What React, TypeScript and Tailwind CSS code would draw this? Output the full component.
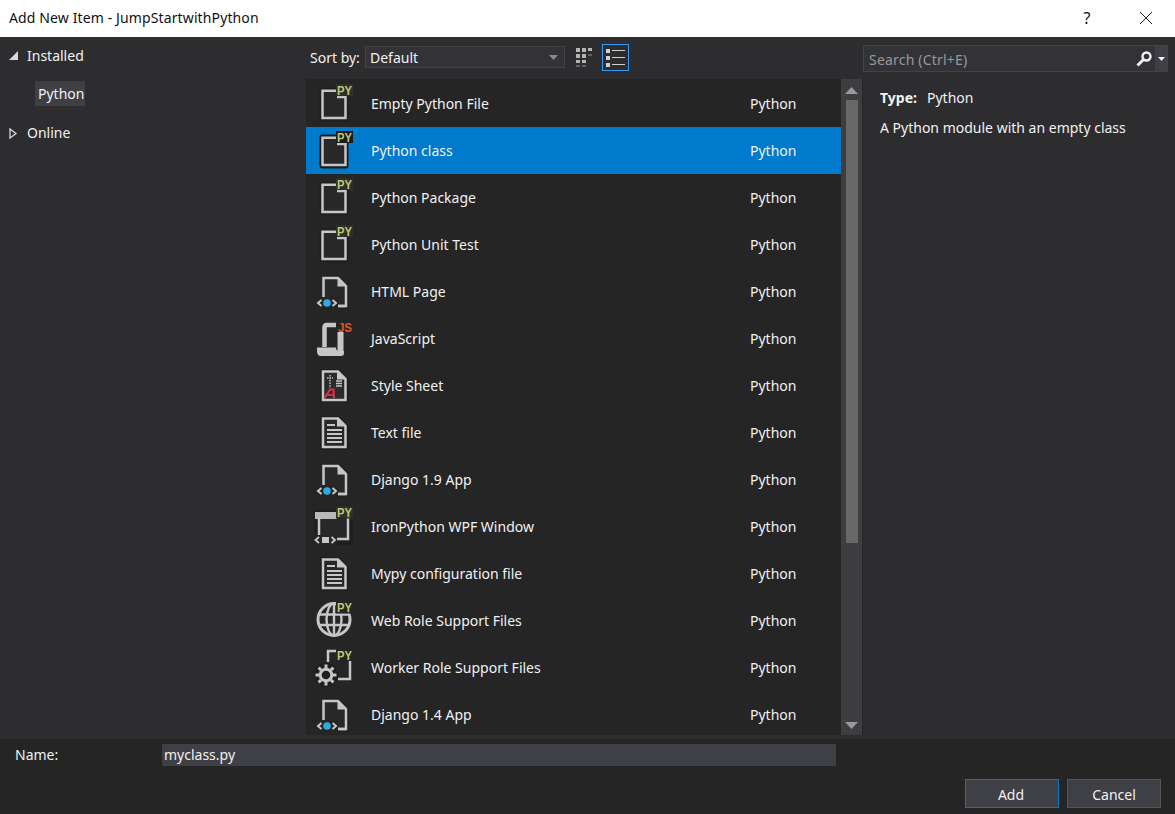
import React from 'react';

const GRAY = '#c6c6c6';

const PY = ({ x = 25, y = 14.5, dark = '#2f2f2c' }: { x?: number; y?: number; dark?: string }) => (
  <>
    <rect x={x - 1} y={y - 10.5} width={17} height={12} fill={dark} />
    <text x={x} y={y} fontFamily="'Liberation Sans', sans-serif" fontWeight="700" fontSize="12.5" textLength="15" lengthAdjust="spacingAndGlyphs" fill="#bcc873">PY</text>
  </>
);

// plain page with a notch, PY badge in the corner
const PyFile = ({ selected }: { selected?: boolean }) => (
  <svg width="48" height="47" viewBox="0 0 48 47">
    <rect x="7.5" y="7.5" width="29" height="34" rx="3" fill={selected ? '#1b1b1c' : '#1f1f20'} />
    <rect x="10.5" y="11" width="23" height="27" fill="#28282a" />
    <path d="M24 10.75H10.5V38H33.5V17H25" fill="none" stroke={GRAY} strokeWidth="2.5" />
    <PY dark={selected ? '#1b1b1c' : '#2f2f2c'} />
  </svg>
);

const HtmlFile = () => (
  <svg width="48" height="47" viewBox="0 0 48 47">
    <path d="M10 29V7.5H27L36.5 17V41H24V30H10Z" fill="#1f1f20" />
    <path d="M11.5 30V10H26L34 18V38H26" fill="#28282a" stroke={GRAY} strokeWidth="2.5" />
    <path d="M25.5 9.5L34.5 18.5H25.5Z" fill={GRAY} />
    <rect x="4" y="29" width="22" height="12" fill="#252526" />
    <path d="M9.5 32L6 35L9.5 38M20.5 32L24 35L20.5 38" fill="none" stroke={GRAY} strokeWidth="2" />
    <path d="M26 38H34" stroke={GRAY} strokeWidth="2.5" />
    <circle cx="15" cy="35" r="3.8" fill="#2fa9e8" />
  </svg>
);

const JsFile = () => (
  <svg width="48" height="47" viewBox="0 0 48 47">
    <path d="M12.5 32V12.5Q12.5 10 15 10H24" fill="none" stroke={GRAY} strokeWidth="4.5" />
    <path d="M28.5 17V36" fill="none" stroke={GRAY} strokeWidth="6" />
    <path d="M5 32.5H24Q24 36 27 36H32V38Q32 41 29 41H9Q5 41 5 36Z" fill={GRAY} />
    <text x="26" y="17" fontFamily="'Liberation Sans', sans-serif" fontWeight="700" fontSize="12" textLength="14" lengthAdjust="spacingAndGlyphs" fill="#e8541e">JS</text>
  </svg>
);

const StyleFile = () => (
  <svg width="48" height="47" viewBox="0 0 48 47">
    <path d="M8 7H27L37 17V41H8Z" fill="#1f1f20" />
    <path d="M11 9.5H26L33.5 17V38H11Z" fill="#2a2a2b" stroke={GRAY} strokeWidth="2.5" />
    <path d="M25 9.5V17.5H33.5Z" fill={GRAY} />
    <path d="M15 16H21M18 13V26" stroke={GRAY} strokeWidth="1.4" strokeDasharray="1.5 1" fill="none" />
    <path d="M24 19H30M24 21.5H30M24 24H30" stroke={GRAY} strokeWidth="1.3" />
    <path d="M12.5 36L18 27.5H21.5L22 36" fill="none" stroke="#d9304f" strokeWidth="2.2" />
    <path d="M15 33H21" stroke="#d9304f" strokeWidth="1.8" />
  </svg>
);

const TextFile = () => (
  <svg width="48" height="47" viewBox="0 0 48 47">
    <path d="M8 7H27L37 17V41H8Z" fill="#1f1f20" />
    <path d="M11 9.5H26L33.5 17V38H11Z" fill="#28282a" stroke={GRAY} strokeWidth="2.5" />
    <path d="M25 9.5V17.5H33.5Z" fill={GRAY} />
    <path d="M15 16H23M15 21H30M15 25H30M15 29H30M15 33H30" stroke={GRAY} strokeWidth="2" />
  </svg>
);

const WpfWindow = () => (
  <svg width="48" height="47" viewBox="0 0 48 47">
    <rect x="2" y="7" width="39" height="35" fill="#1f1f20" />
    <rect x="6" y="16" width="30" height="20" fill="#28282a" />
    <rect x="3" y="9" width="22" height="7" fill="#b8b8b8" />
    <path d="M7 15V32" fill="none" stroke={GRAY} strokeWidth="2.5" />
    <path d="M36 15V36H25" fill="none" stroke={GRAY} strokeWidth="2.5" />
    <rect x="2" y="32" width="23" height="10" fill="#252526" />
    <path d="M7 34L3.5 37L7 40M19.5 34L23 37L19.5 40" fill="none" stroke={GRAY} strokeWidth="1.8" />
    <rect x="10" y="34" width="7" height="6" fill={GRAY} />
    <PY x={25} y={14} />
  </svg>
);

const Globe = () => (
  <svg width="48" height="47" viewBox="0 0 48 47">
    <circle cx="22" cy="22.5" r="16" fill="none" stroke={GRAY} strokeWidth="3" />
    <ellipse cx="22" cy="22.5" rx="7.5" ry="16" fill="none" stroke={GRAY} strokeWidth="2.4" />
    <path d="M22 6V39M6 17.5H38M6 28H38" stroke={GRAY} strokeWidth="2.4" />
    <PY x={25} y={15} dark="#252526" />
  </svg>
);

const Worker = () => (
  <svg width="48" height="47" viewBox="0 0 48 47">
    <path d="M16 18V7H24M38 17V35H26" fill="none" stroke={GRAY} strokeWidth="2.5" />
    <rect x="2" y="19" width="24" height="24" rx="12" fill="#1f1f20" />
    <circle cx="14" cy="31" r="5.8" fill="none" stroke={GRAY} strokeWidth="3" />
    {[0, 45, 90, 135].map((deg) => (
      <path key={deg} d="M14 20.5V24M14 38V41.5" stroke={GRAY} strokeWidth="3" transform={`rotate(${deg} 14 31)`} />
    ))}
    <text x="25" y="15.5" fontFamily="'Liberation Sans', sans-serif" fontWeight="700" fontSize="12.5" textLength="15" lengthAdjust="spacingAndGlyphs" fill="#bcc873">PY</text>
  </svg>
);

const icons: Record<string, React.ReactNode> = {
  py: <PyFile />,
  pysel: <PyFile selected />,
  html: <HtmlFile />,
  js: <JsFile />,
  css: <StyleFile />,
  txt: <TextFile />,
  wpf: <WpfWindow />,
  web: <Globe />,
  worker: <Worker />,
};

const items = [
  { name: 'Empty Python File', icon: 'py' },
  { name: 'Python class', icon: 'pysel', selected: true },
  { name: 'Python Package', icon: 'py' },
  { name: 'Python Unit Test', icon: 'py' },
  { name: 'HTML Page', icon: 'html' },
  { name: 'JavaScript', icon: 'js' },
  { name: 'Style Sheet', icon: 'css' },
  { name: 'Text file', icon: 'txt' },
  { name: 'Django 1.9 App', icon: 'html' },
  { name: 'IronPython WPF Window', icon: 'wpf' },
  { name: 'Mypy configuration file', icon: 'txt' },
  { name: 'Web Role Support Files', icon: 'web' },
  { name: 'Worker Role Support Files', icon: 'worker' },
  { name: 'Django 1.4 App', icon: 'html' },
];

const App = () => {
  return (
    <div className="w-[1175px] h-[814px] flex flex-col overflow-hidden bg-[#2d2d30] text-[#f1f1f1] font-['Noto_Sans',sans-serif] text-[14px] leading-[20px]">
      {/* Title bar */}
      <div className="h-[37px] shrink-0 bg-white text-[#111111] flex items-center pl-[9px] pb-[1px]">
        <span className="tracking-[0.12px]">Add New Item - JumpStartwithPython</span>
        <span className="ml-auto w-[10px] text-center text-[16px]">?</span>
        <svg className="ml-[47px] mr-[22px]" width="14" height="14" viewBox="0 0 14 14">
          <path d="M1 1L13 13M13 1L1 13" stroke="#1a1a1a" strokeWidth="1" fill="none" />
        </svg>
      </div>

      {/* Body */}
      <div className="h-[702px] shrink-0 flex">
        {/* Left tree */}
        <div className="w-[306px] shrink-0">
          <div className="h-[38px] flex items-center pb-[1px]">
            <svg className="ml-[9px] mr-[9px]" width="9" height="9" viewBox="0 0 9 9">
              <path d="M9 0V9H0Z" fill="#d8d8d8" />
            </svg>
            <span>Installed</span>
          </div>
          <div className="h-[25px] w-[50px] ml-[35px] mt-[6px] pl-[3px] bg-[#3f3f46] flex items-center">Python</div>
          <div className="h-[38px] flex items-center mt-[8px]">
            <svg className="ml-[9px] mr-[9px]" width="9" height="11" viewBox="0 0 9 11">
              <path d="M1 1L7 5.5L1 10Z" fill="none" stroke="#d8d8d8" strokeWidth="1.3" />
            </svg>
            <span>Online</span>
          </div>
        </div>

        {/* Center */}
        <div className="w-[557px] shrink-0 flex flex-col">
          <div className="h-[42px] shrink-0 flex items-center pb-[2px]">
            <span className="ml-[4px] w-[55px] pt-[2px]">Sort by:</span>
            <div className="w-[200px] h-[22px] bg-[#333337] border border-[#434346] flex items-center pl-[4px] pr-[4px]">
              <span className="pt-[2px]">Default</span>
              <svg className="ml-auto mr-[2px]" width="9" height="5" viewBox="0 0 9 5">
                <path d="M0 0H9L4.5 5Z" fill="#8a8a8a" />
              </svg>
            </div>
            <svg className="ml-[10px]" width="18" height="20" viewBox="0 0 18 20">
              <path d="M1 1h4v4H1zM7 1h4v4H7zM13 1h4v3h-4zM1 7h4v4H1zM7 7h4v4H7zM1 13h4v3H1zM7 13h4v3H7z" fill="#b5b5b5" />
              <path d="M13 8h4M1 19h4M7 19h4" stroke="#999" strokeWidth="1" />
            </svg>
            <div className="ml-[9px] w-[27px] h-[27px] border border-[#3399ff] flex items-center justify-center">
              <svg width="19" height="19" viewBox="0 0 19 19">
                <path d="M0 1h4v4H0zM0 8h4v4H0zM0 15h4v4H0z" fill="#d0d0d0" />
                <path d="M6 2.5h13M6 9.5h13M6 16.5h13" stroke="#d0d0d0" strokeWidth="1.2" />
              </svg>
            </div>
          </div>
          <div className="h-[656px] flex border-r border-[#252526]">
            <div className="w-[535px] bg-[#252526] pt-[1px]">
              {items.map((item) => (
                <div
                  key={item.name}
                  className={`h-[47px] flex items-center ${item.selected ? 'bg-[#007acc]' : ''}`}
                >
                  <div className="w-[65px] pl-[6px] shrink-0">{icons[item.icon]}</div>
                  <span className="w-[379px] shrink-0 whitespace-nowrap">{item.name}</span>
                  <span>Python</span>
                </div>
              ))}
            </div>
            <div className="w-[21px] bg-[#3e3e42] flex flex-col items-center pt-[8px]">
              <svg width="13" height="7" viewBox="0 0 13 7">
                <path d="M6.5 0L13 7H0Z" fill="#999999" />
              </svg>
              <div className="w-[12px] h-[443px] mt-[6px] bg-[#686868]" />
              <svg className="mt-auto mb-[6px]" width="13" height="7" viewBox="0 0 13 7">
                <path d="M0 0H13L6.5 7Z" fill="#999999" />
              </svg>
            </div>
          </div>
        </div>

        {/* Right details */}
        <div className="flex-1 min-w-0">
          <div className="mt-[8px] w-[305px] h-[27px] bg-[#333337] border border-[#434346] flex items-center pl-[5px] text-[#999999]">
            <span className="pt-[2px] tracking-[0.2px]">Search (Ctrl+E)</span>
            <div className="ml-auto flex items-center h-full">
              <svg className="mr-[3px]" width="16" height="16" viewBox="0 0 16 16">
                <circle cx="10.5" cy="5.5" r="4" fill="none" stroke="#f1f1f1" strokeWidth="2.4" />
                <path d="M7.5 8.5L1.5 14.5" stroke="#f1f1f1" strokeWidth="3" />
              </svg>
              <div className="w-[12px] h-full bg-[#3f3f46] flex items-center justify-center">
                <svg width="7" height="4" viewBox="0 0 7 4">
                  <path d="M0 0H7L3.5 4Z" fill="#f1f1f1" />
                </svg>
              </div>
            </div>
          </div>
          <div className="mt-[16px] ml-[17px] h-[20px] flex">
            <span className="font-bold w-[47px]">Type:</span>
            <span>Python</span>
          </div>
          <div className="mt-[10px] ml-[17px] whitespace-nowrap">A Python module with an empty class</div>
        </div>
      </div>

      {/* Footer */}
      <div className="flex-1 bg-[#252526] flex flex-col">
        <div className="mt-[5px] h-[22px] flex items-center">
          <span className="ml-[15px] w-[147px]">Name:</span>
          <div className="w-[674px] h-full bg-[#3f3f46] pl-[2px] flex items-center">myclass.py</div>
        </div>
        <div className="mt-[13px] flex justify-end gap-[8px] pr-[14px]">
          <button className="w-[94px] h-[29px] bg-[#3f3f46] border border-[#007acc] text-center pt-[2px] pr-[2px]">Add</button>
          <button className="w-[94px] h-[29px] bg-[#3f3f46] border border-[#555555] text-center pt-[2px]">Cancel</button>
        </div>
      </div>
    </div>
  );
};

export default App;
